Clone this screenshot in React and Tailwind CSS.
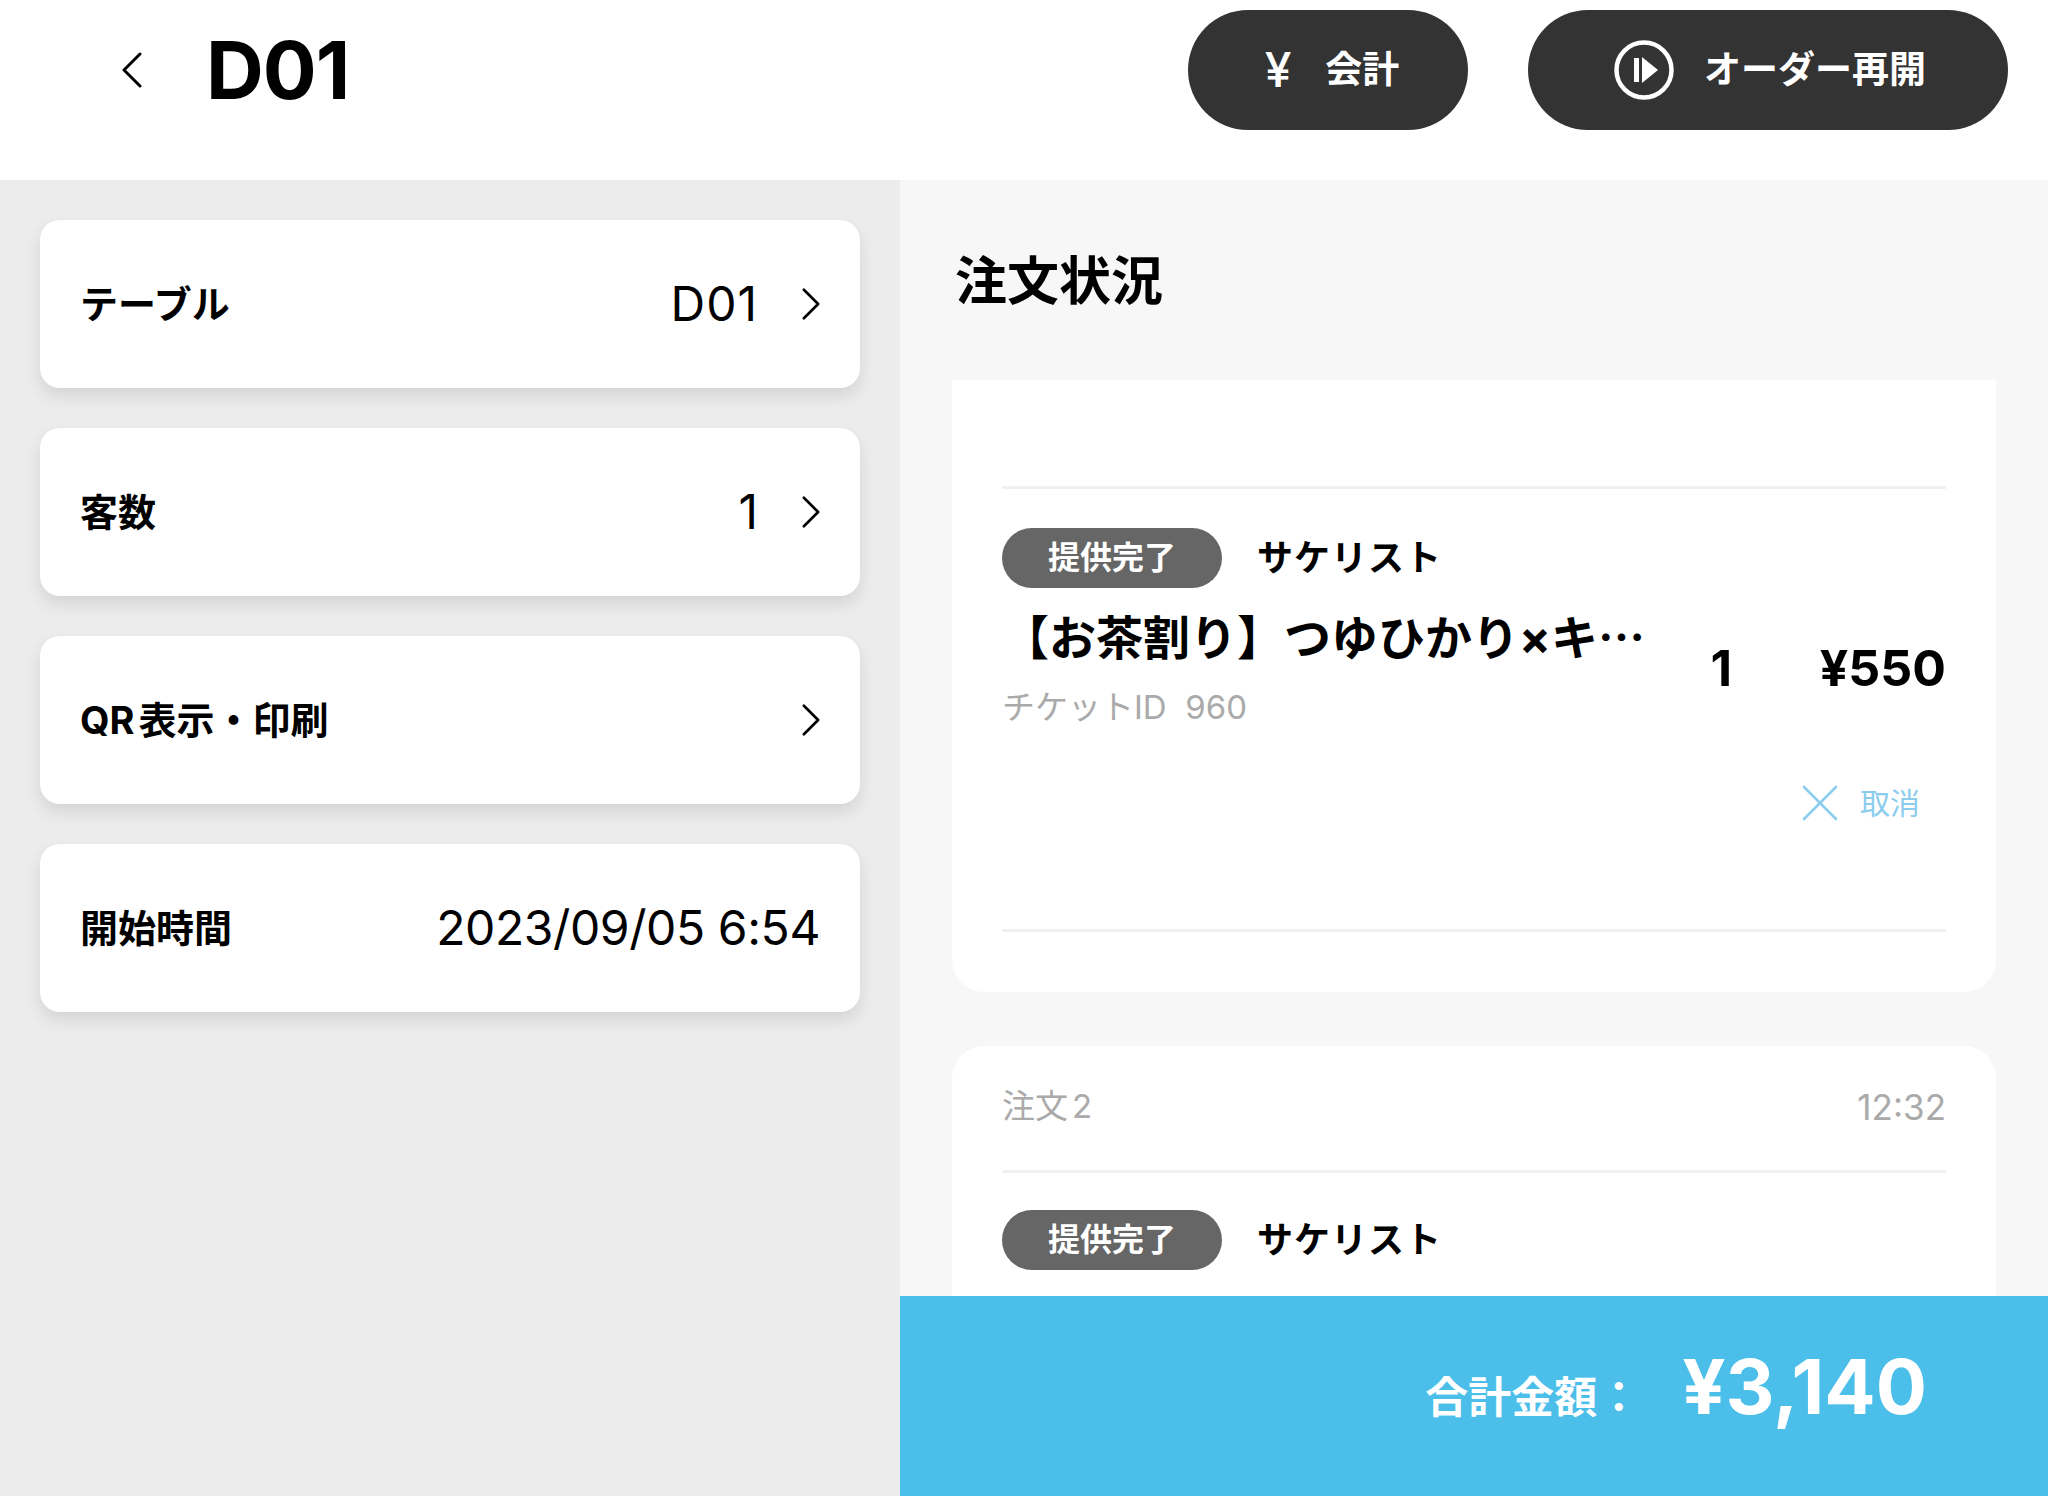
import React from "react";

function Chevron({ dir = "right", className = "" }) {
  return (
    <svg viewBox="0 0 20 36" className={className} fill="none" stroke="currentColor" strokeWidth="3" strokeLinecap="round" strokeLinejoin="round">
      {dir === "right" ? <path d="M2 2 L18 18 L2 34" /> : <path d="M18 2 L2 18 L18 34" />}
    </svg>
  );
}

function InfoCard({ label, value, arrow = true, valueClass = "" }) {
  return (
    <div className="h-[168px] rounded-[20px] bg-white shadow-[0_8px_16px_rgba(0,0,0,0.1)] flex items-center pl-10 pr-10">
      <span className="text-[38px] font-bold text-black">{label}</span>
      <span className={`ml-auto text-[48px] text-black ${valueClass}`}>{value}</span>
      {arrow && <Chevron className="ml-11 w-[18px] h-[32px] text-black" />}
    </div>
  );
}

function Badge() {
  return (
    <div className="flex items-center h-[60px]">
      <span className="w-[220px] h-[60px] rounded-full bg-[#666666] text-white text-[32px] font-bold flex items-center justify-center">提供完了</span>
      <span className="ml-[35px] text-[36px] font-bold text-black tracking-[1px]">サケリスト</span>
    </div>
  );
}

export default function App() {
  return (
    <div className="relative w-[2048px] h-[1496px] overflow-hidden bg-white font-['Inter','Noto_Sans_CJK_JP',sans-serif]">
      <header className="h-[180px] flex items-start bg-white">
        <Chevron dir="left" className="ml-[122px] mt-[52px] w-[20px] h-[36px] text-black" />
        <h1 className="ml-[64px] mt-[22px] text-[80px] leading-[96px] font-bold text-black tracking-[-1px]">D01</h1>
        <div className="ml-auto mr-10 mt-[10px] flex gap-[60px]">
          <button className="w-[280px] h-[120px] pl-2 rounded-full bg-[#333333] text-white flex items-center justify-center gap-[34px] text-[37px] font-bold">
            <span className="text-[48px] font-medium">¥</span>
            <span>会計</span>
          </button>
          <button className="w-[480px] h-[120px] pl-1 rounded-full bg-[#333333] text-white flex items-center justify-center gap-[30px] text-[37px] font-bold">
            <svg viewBox="0 0 60 60" className="w-[60px] h-[60px]" fill="none">
              <circle cx="30" cy="30" r="27.5" stroke="white" strokeWidth="4.5" />
              <rect x="20" y="18" width="5" height="24" fill="white" />
              <path d="M28 17 L44 30 L28 43 Z" fill="white" />
            </svg>
            <span>オーダー再開</span>
          </button>
        </div>
      </header>

      <main className="flex h-[1316px]">
        <aside className="w-[900px] bg-[#ececec] px-10 pt-10 flex flex-col gap-10">
          <InfoCard label="テーブル" value="D01" valueClass="tracking-[1px]" />
          <InfoCard label="客数" value="1" />
          <InfoCard label={<>QR<span className="ml-1">表示・印刷</span></>} value="" />
          <InfoCard label="開始時間" value="2023/09/05 6:54" arrow={false} valueClass="tracking-[-0.4px]" />
        </aside>

        <section className="flex-1 bg-[#f7f7f7] overflow-hidden">
          <h2 className="ml-[55px] mt-[66px] h-[72px] leading-[72px] text-[52px] font-bold text-black">注文状況</h2>

          <div className="mt-[62px] ml-[52px] w-[1044px] flex flex-col gap-[54px]">
            <article className="h-[612px] bg-white rounded-b-[32px] px-[50px] pt-[106px]">
              <div className="h-[3px] bg-[#f0f0f0]" />
              <div className="mt-[39px]">
                <Badge />
              </div>
              <div className="flex mt-[12px]">
                <div className="w-[660px]">
                  <div className="text-[47px] leading-[70px] font-bold text-black whitespace-nowrap">
                    【お茶割り】つゆひかり×キ<span className="font-['Noto_Sans_CJK_JP',sans-serif]">…</span>
                  </div>
                  <div className="text-[33px] leading-[50px] text-[#aaaaaa] mt-[9px]">チケットID&nbsp; 960</div>
                </div>
                <div className="ml-auto flex items-center h-[104px] mt-[16px] text-[50px] font-bold text-black">
                  <span>1</span>
                  <span className="w-[214px] text-right">¥550</span>
                </div>
              </div>
              <div className="flex justify-end items-center mt-[51px] pr-[26px] h-[40px] gap-[22px] text-[#8ccdee]">
                <svg viewBox="0 0 36 36" className="w-[36px] h-[36px]" fill="none" stroke="currentColor" strokeWidth="2.6" strokeLinecap="round">
                  <path d="M2 2 L34 34 M34 2 L2 34" />
                </svg>
                <span className="text-[30px]">取消</span>
              </div>
              <div className="h-[3px] bg-[#f0f0f0] mt-[106px]" />
            </article>

            <article className="h-[400px] bg-white rounded-t-[32px] px-[50px]">
              <div className="h-[124px] flex items-center justify-between text-[33px] text-[#aaaaaa] pb-[2px]">
                <span>注文<span className="ml-1">2</span></span>
                <span className="text-[35px]">12:32</span>
              </div>
              <div className="h-[3px] bg-[#f0f0f0]" />
              <div className="mt-[37px]">
                <Badge />
              </div>
            </article>
          </div>
        </section>
      </main>

      <footer className="absolute right-0 bottom-0 w-[1148px] h-[200px] pb-5 bg-[#4cbeea] text-white flex items-center justify-end pr-[121px]">
        <span className="text-[43px] font-bold mt-[22px]">合計金額：</span>
        <span className="ml-[42px] text-[76px] font-bold">¥3,140</span>
      </footer>
    </div>
  );
}
